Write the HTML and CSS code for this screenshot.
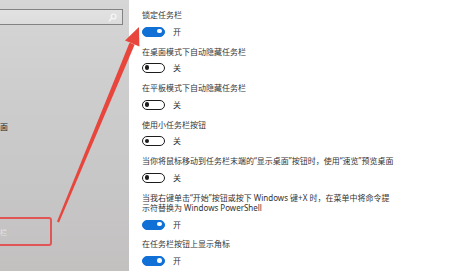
FILE: index.html
```html
<!DOCTYPE html>
<html lang="zh-CN">
<head>
<meta charset="utf-8">
<link rel="stylesheet" href="styles.css">
</head>
<body>
<div class="screen">
  <aside class="nav">
    <div class="search">
      <svg class="search-icon" width="9" height="9" viewBox="0 0 9 9">
        <circle cx="5.6" cy="3.4" r="2.4" fill="none" stroke="#f6f6f6" stroke-width="1.2"/>
        <line x1="3.9" y1="5.1" x2="1.2" y2="7.9" stroke="#f6f6f6" stroke-width="1.4" stroke-linecap="round"/>
      </svg>
    </div>
    <div class="nav-frag">面</div>
    <div class="nav-sel"><span class="nav-sel-text">栏</span></div>
  </aside>
  <main class="settings">
    <div class="item">
      <div class="label">锁定任务栏</div>
      <div class="switch-row"><span class="toggle on"></span><span class="state">开</span></div>
    </div>
    <div class="item">
      <div class="label">在桌面模式下自动隐藏任务栏</div>
      <div class="switch-row"><span class="toggle"></span><span class="state">关</span></div>
    </div>
    <div class="item">
      <div class="label">在平板模式下自动隐藏任务栏</div>
      <div class="switch-row"><span class="toggle"></span><span class="state">关</span></div>
    </div>
    <div class="item">
      <div class="label">使用小任务栏按钮</div>
      <div class="switch-row"><span class="toggle"></span><span class="state">关</span></div>
    </div>
    <div class="item">
      <div class="label">当你将鼠标移动到任务栏末端的“显示桌面”按钮时，使用“速览”预览桌面</div>
      <div class="switch-row"><span class="toggle"></span><span class="state">关</span></div>
    </div>
    <div class="item">
      <div class="label">当我右键单击“开始”按钮或按下 Windows 键+X 时，在菜单中将命令提<br>示符替换为 Windows PowerShell</div>
      <div class="switch-row"><span class="toggle on"></span><span class="state">开</span></div>
    </div>
    <div class="item">
      <div class="label">在任务栏按钮上显示角标</div>
      <div class="switch-row"><span class="toggle on"></span><span class="state">开</span></div>
    </div>
  </main>
  <svg class="arrow" width="469" height="271" viewBox="0 0 469 271">
    <polygon points="129.6,42.5 134.6,44.7 59,222.4 57,221.6" fill="#e8463c"/>
    <polygon points="139,27 139.4,46.6 125,40.6" fill="#e8463c"/>
  </svg>
</div>
</body>
</html>
```
FILE: styles.css
```css
html, body {
  margin: 0;
  padding: 0;
}
body {
  width: 469px;
  height: 271px;
  overflow: hidden;
  font-family: "Noto Sans", "Noto Sans CJK SC", sans-serif;
  background: #ffffff;
}
.screen {
  position: relative;
  display: flex;
  width: 469px;
  height: 271px;
  overflow: hidden;
}
.nav {
  width: 129px;
  flex: none;
  display: flex;
  flex-direction: column;
  background: linear-gradient(180deg, #d6d6d6 0%, #cdcdcd 35%, #c7c6c6 70%, #c3c0c0 100%);
  overflow: hidden;
}
.search {
  margin-top: 9px;
  margin-left: -3px;
  width: 119px;
  height: 14px;
  border: 1.5px solid #838383;
  background: linear-gradient(180deg, #e2e2e2, #dcdcdc);
  display: flex;
  align-items: center;
  justify-content: flex-end;
  padding-right: 5px;
  box-sizing: content-box;
}
.search-icon {
  display: block;
}
.nav-frag {
  margin-top: 97px;
  height: 10px;
  line-height: 10px;
  font-size: 8px;
  color: #1e1e1e;
}
.nav-sel {
  margin-top: 85px;
  margin-left: -12px;
  width: 60px;
  height: 25px;
  border: 2px solid #e25556;
  border-radius: 3px;
  display: flex;
  align-items: center;
  overflow: hidden;
}
.nav-sel-text {
  margin-left: 10px;
  font-size: 7px;
  color: #e4e4e4;
}
.settings {
  flex: 1;
  padding: 10px 0 0 13px;
  display: flex;
  flex-direction: column;
  gap: 9.9px;
  color: #333333;
  font-size: 8px;
}
.item {
  display: flex;
  flex-direction: column;
  gap: 6.7px;
}
.label {
  line-height: 10px;
  white-space: nowrap;
}
.switch-row {
  display: flex;
  align-items: center;
  height: 10px;
}
.toggle {
  position: relative;
  box-sizing: border-box;
  width: 23px;
  height: 10px;
  border-radius: 5px;
  border: 1.6px solid #1c1c1c;
  background: #ffffff;
}
.toggle::after {
  content: "";
  position: absolute;
  top: 1.2px;
  left: 1.8px;
  width: 4.6px;
  height: 4.6px;
  border-radius: 50%;
  background: #1c1c1c;
}
.toggle.on {
  border-color: #1170d6;
  background: #1170d6;
}
.toggle.on::after {
  left: auto;
  right: 2px;
  background: #ffffff;
}
.state {
  margin-left: 8px;
  line-height: 10px;
}
.arrow {
  position: absolute;
  left: 0;
  top: 0;
  pointer-events: none;
}
```
